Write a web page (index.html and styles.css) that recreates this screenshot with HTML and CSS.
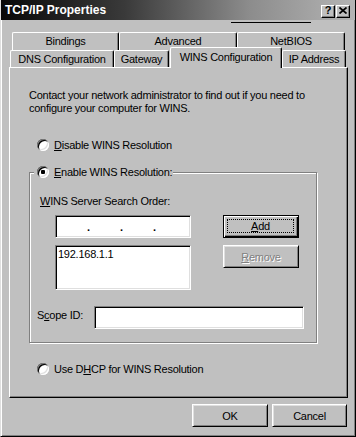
FILE: index.html
```html
<!DOCTYPE html>
<html lang="en">
<head>
    <meta charset="UTF-8">
    <title>TCP/IP Properties</title>
    <link rel="stylesheet" href="styles.css">
</head>
<body>
    <div class="window">
        <div class="titlebar">
            <span class="title">TCP/IP Properties</span>
            <div class="title-buttons">
                <button class="tbtn">?</button>
                <button class="tbtn">
                    <svg width="8" height="7" viewBox="0 0 8 7"><path d="M0.5 0.5 L7.5 6.5 M7.5 0.5 L0.5 6.5" stroke="#000" stroke-width="1.7" fill="none"/></svg>
                </button>
            </div>
        </div>
        <div class="scratch"></div>

        <div class="tab-row back">
            <div class="tab" style="width:107px">Bindings</div>
            <div class="tab" style="width:118px">Advanced</div>
            <div class="tab" style="width:108px">NetBIOS</div>
        </div>
        <div class="tab-row front">
            <div class="tab" style="width:104px">DNS Configuration</div>
            <div class="tab" style="width:55px">Gateway</div>
            <div class="tab selected" style="width:112px">WINS Configuration</div>
            <div class="tab" style="width:64px">IP Address</div>
        </div>

        <div class="panel">
            <p class="intro">Contact your network administrator to find out if you need to configure your computer for WINS.</p>

            <div class="option disable-opt">
                <span class="radio"></span>
                <span><u>D</u>isable WINS Resolution</span>
            </div>

            <div class="group">
                <div class="option group-label">
                    <span class="radio checked"></span>
                    <span><u>E</u>nable WINS Resolution:</span>
                </div>
                <div class="field-label"><u>W</u>INS Server Search Order:</div>
                <div class="server-grid">
                    <div class="sunken ip-field">
                        <span class="octet"></span><span class="dot">.</span>
                        <span class="octet"></span><span class="dot">.</span>
                        <span class="octet"></span><span class="dot">.</span>
                        <span class="octet"></span>
                    </div>
                    <button class="btn default"><span class="focus"><u>A</u>dd</span></button>
                    <div class="sunken server-list">192.168.1.1</div>
                    <button class="btn disabled"><u>R</u>emove</button>
                </div>
                <div class="scope-row">
                    <span class="scope-label">S<u>c</u>ope ID:</span>
                    <div class="sunken scope-field"></div>
                </div>
            </div>

            <div class="option dhcp-opt">
                <span class="radio"></span>
                <span>Use D<u>H</u>CP for WINS Resolution</span>
            </div>
        </div>

        <div class="actions">
            <button class="btn ok">OK</button>
            <button class="btn cancel">Cancel</button>
        </div>
    </div>
</body>
</html>
```

FILE: styles.css
```css
* { margin: 0; padding: 0; box-sizing: border-box; }
body {
    font-family: "Liberation Sans", Arial, sans-serif;
    font-size: 11px;
    letter-spacing: -0.25px;
    line-height: 14px;
    color: #000;
    background: #c0c0c0;
}
u { text-decoration: underline; text-underline-offset: 1px; }

.window {
    position: relative;
    width: 356px;
    height: 437px;
    background: #c0c0c0;
    border: 1px solid;
    border-top: none;
    border-color: #000 #000 #000 #dfdfdf;
    box-shadow: inset 1px 0 #fff, inset -1px -1px #808080;
    padding: 0 1px;
}

/* title bar */
.titlebar {
    height: 20px;
    margin: 0 -1px;
    padding: 0 5px 0 4px;
    display: flex;
    align-items: center;
    justify-content: space-between;
    background: linear-gradient(90deg, #080808 0%, #3a3a3a 35%, #8c8c8c 70%, #b4b4b4 100%);
}
.title {
    color: #fff;
    font-weight: 700;
    font-size: 12px;
    letter-spacing: 0;
}
.title-buttons {
    display: flex;
    gap: 1px;
    margin-top: 2px;
}
.tbtn {
    width: 14px;
    height: 13px;
    display: flex;
    align-items: center;
    justify-content: center;
    background: #c0c0c0;
    border: 1px solid;
    border-color: #fff #000 #000 #fff;
    box-shadow: inset -1px -1px #808080;
    font-family: "Liberation Sans", Arial, sans-serif;
    font-weight: 700;
    font-size: 11px;
    line-height: 11px;
    padding: 0 0 1px 0;
}
.scratch {
    position: absolute;
    top: 22px;
    left: 230px;
    width: 80px;
    height: 1px;
    background: #000;
}

/* tabs */
.tab-row {
    display: flex;
}
.tab-row.back {
    margin-top: 12px;
    padding-left: 10px;
    height: 18px;
}
.tab-row.front {
    padding-left: 8px;
    height: 17px;
}
.tab {
    height: 100%;
    text-align: center;
    line-height: 16px;
    border-top: 1px solid #fff;
    border-left: 1px solid #fff;
    border-right: 1px solid #000;
    border-radius: 2px 2px 0 0;
    box-shadow: inset -1px 0 #808080;
    white-space: nowrap;
}
.tab.selected {
    position: relative;
    z-index: 1;
    margin-left: 1px;
    margin-top: -3px;
    height: 21px;
    line-height: 18px;
    background: #c0c0c0;
}

/* panel */
.panel {
    margin-left: 7px;
    width: 339px;
    height: 331px;
    border: 1px solid;
    border-color: #fff #000 #000 #fff;
    box-shadow: inset -1px -1px #808080;
    display: flex;
    flex-direction: column;
    align-items: flex-start;
}
.intro {
    margin: 21px 0 0 19px;
    width: 300px;
    line-height: 13px;
}
.option {
    display: flex;
    align-items: center;
    gap: 5px;
    height: 14px;
    white-space: nowrap;
}
.disable-opt { margin: 23px 0 0 27px; }
.dhcp-opt { margin: 19px 0 0 27px; }

.radio {
    width: 12px;
    height: 12px;
    border-radius: 50%;
    background: #fff;
    box-shadow: inset 1px 1px #808080, inset -1px -1px #fff, inset 2px 2px #000, inset -2px -2px #dfdfdf;
    display: flex;
    align-items: center;
    justify-content: center;
}
.radio.checked::after {
    content: '';
    width: 4px;
    height: 4px;
    border-radius: 1px;
    background: #000;
}

/* group box */
.group {
    margin: 20px 0 0 19px;
    width: 288px;
    padding-bottom: 13px;
    border: 1px solid #808080;
    box-shadow: inset 1px 1px #fff, 1px 1px #fff;
    display: flex;
    flex-direction: column;
    align-items: flex-start;
}
.group-label {
    margin: -8px 0 0 4px;
    padding: 0 1px 0 3px;
    background: #c0c0c0;
}
.field-label {
    margin: 15px 0 0 10px;
}
.server-grid {
    margin: 7px 0 0 25px;
    display: grid;
    grid-template-columns: 136px 76px;
    grid-template-rows: 23px 45px;
    column-gap: 32px;
    row-gap: 7px;
    align-items: start;
}
.sunken {
    background: #fff;
    border: 1px solid;
    border-color: #808080 #fff #fff #808080;
    box-shadow: inset 1px 1px #000, inset -1px -1px #dfdfdf;
}
.ip-field {
    height: 23px;
    display: flex;
    align-items: center;
    padding-left: 1px;
}
.octet { width: 30px; }
.dot {
    width: 3px;
    text-align: center;
    letter-spacing: 0;
    font-weight: 700;
}
.server-list {
    height: 45px;
    padding: 1px 2px;
}
.scope-row {
    margin: 16px 0 0 7px;
    display: flex;
    align-items: flex-start;
}
.scope-label {
    width: 57px;
    margin-top: 2px;
}
.scope-field {
    width: 210px;
    height: 23px;
}

/* buttons */
.btn {
    height: 23px;
    background: #c0c0c0;
    border: 1px solid;
    border-color: #fff #000 #000 #fff;
    box-shadow: inset 1px 1px #dfdfdf, inset -1px -1px #808080;
    font-family: "Liberation Sans", Arial, sans-serif;
    font-size: 11px;
    letter-spacing: -0.25px;
    color: #000;
    display: flex;
    align-items: center;
    justify-content: center;
}
.btn.default {
    border-color: #000;
    box-shadow: inset 1px 1px #fff, inset -1px -1px #000, inset -2px -2px #808080;
    padding: 3px 4px 4px 3px;
}
.focus {
    width: 100%;
    height: 100%;
    border: 1px dotted #000;
    display: flex;
    align-items: center;
    justify-content: center;
}
.btn.disabled {
    color: #808080;
    text-shadow: 1px 1px #fff;
}
.actions {
    margin-top: 6px;
    padding-right: 7px;
    display: flex;
    justify-content: flex-end;
    gap: 4px;
}
.ok { width: 76px; }
.cancel { width: 75px; }
```
